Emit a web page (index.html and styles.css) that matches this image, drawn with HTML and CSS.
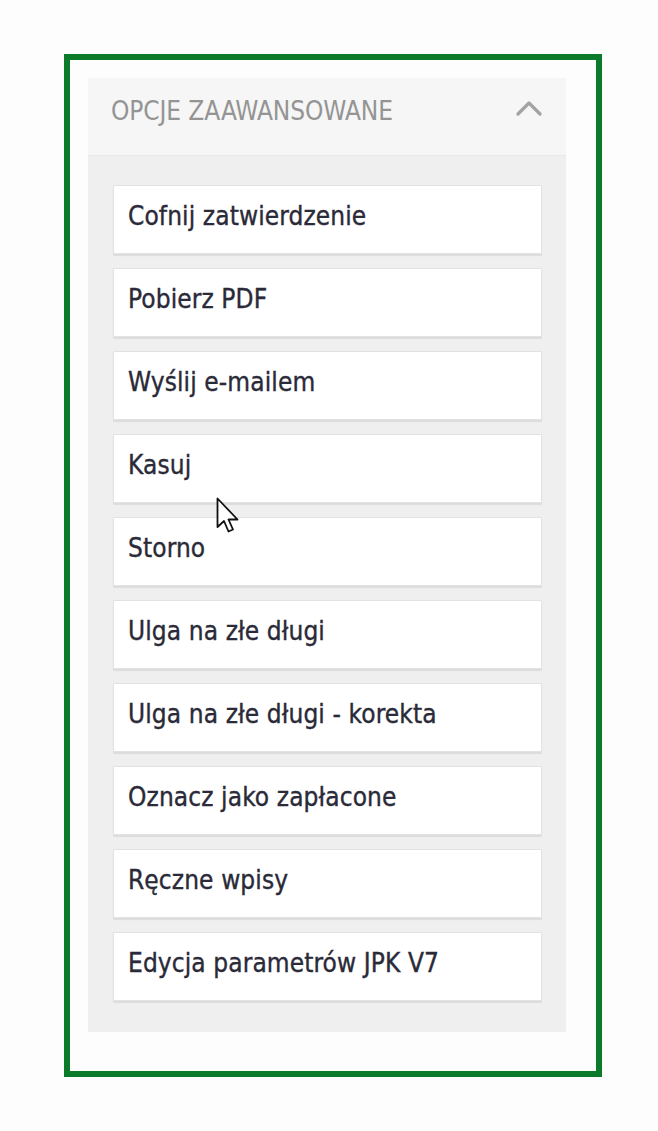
FILE: index.html
```html
<!DOCTYPE html>
<html lang="pl">
<head>
<meta charset="utf-8">
<title>Opcje zaawansowane</title>
<link rel="stylesheet" href="styles.css">
</head>
<body>
<div class="frame">
  <section class="panel">
    <header class="panel-head">
      <span class="panel-title">OPCJE ZAAWANSOWANE</span>
      <svg class="chevron" width="26" height="16" viewBox="0 0 26 16" aria-hidden="true">
        <path d="M2 14 L13 3 L24 14" fill="none" stroke="#a3a3a3" stroke-width="3.2" stroke-linecap="round" stroke-linejoin="round"/>
      </svg>
    </header>
    <div class="panel-body">
      <button class="opt">Cofnij zatwierdzenie</button>
      <button class="opt">Pobierz PDF</button>
      <button class="opt">Wyślij e-mailem</button>
      <button class="opt">Kasuj</button>
      <button class="opt">Storno</button>
      <button class="opt">Ulga na złe długi</button>
      <button class="opt">Ulga na złe długi - korekta</button>
      <button class="opt">Oznacz jako zapłacone</button>
      <button class="opt">Ręczne wpisy</button>
      <button class="opt">Edycja parametrów JPK V7</button>
    </div>
  </section>
  <svg class="cursor" width="28" height="40" viewBox="0 0 28 40" aria-hidden="true">
    <path d="M1.5 1.5 L1.5 30 L8 24 L12.5 34.5 L17 32.5 L12.5 22.5 L21.5 22.5 Z" fill="#fff" stroke="#111" stroke-width="1.8" stroke-linejoin="round"/>
  </svg>
</div>
</body>
</html>
```
FILE: styles.css
```css
html, body {
  margin: 0;
  padding: 0;
  background: #fdfdfd;
}
body {
  font-family: "DejaVu Sans Condensed", "DejaVu Sans", sans-serif;
}
.frame {
  position: relative;
  box-sizing: border-box;
  width: 538px;
  margin: 54px 0 0 64px;
  border: 6px solid #0b7a2a;
  padding: 18px 30px 39px 18px;
  background: #fdfdfd;
}
.panel {
  background: #efefef;
}
.panel-head {
  display: flex;
  align-items: center;
  justify-content: space-between;
  height: 77px;
  padding: 0 24px 0 23px;
  background: #f6f6f6;
  border-bottom: 1px solid #e9e9e9;
}
.panel-title {
  font-size: 26px;
  color: #949494;
  letter-spacing: -0.1px;
  padding-bottom: 12px;
}
.chevron {
  display: block;
  margin-bottom: 18px;
}
.panel-body {
  display: flex;
  flex-direction: column;
  gap: 14px;
  padding: 29px 24px 31px 25px;
}
.opt {
  display: flex;
  align-items: center;
  box-sizing: border-box;
  height: 69px;
  margin: 0;
  padding: 0 14px 7px;
  background: #fff;
  border: 1px solid #e2e2e2;
  border-radius: 1px;
  box-shadow: 0 2px 1px rgba(0, 0, 0, 0.08);
  font-family: inherit;
  font-size: 26px;
  color: #2a2a38;
  -webkit-text-stroke: 0.35px #2a2a38;
  text-align: left;
  letter-spacing: 0.1px;
  cursor: pointer;
}
.cursor {
  position: absolute;
  left: 146px;
  top: 437px;
}
```
